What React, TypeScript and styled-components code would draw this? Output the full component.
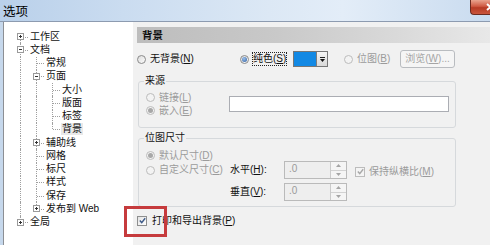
import React from 'react';
import styled, { createGlobalStyle, css } from 'styled-components';

const Global = createGlobalStyle`
  html, body { margin: 0; padding: 0; background: #f0f0f0; }
  body { font-family: "Liberation Sans", "Noto Sans CJK SC", sans-serif; }
  * { box-sizing: border-box; }
`;

const Window = styled.div`
  width: 490px;
  height: 245px;
  overflow: hidden;
  display: flex;
  flex-direction: column;
  color: #111;
`;

const TitleBar = styled.div`
  height: 22px;
  flex: none;
  display: flex;
  align-items: flex-start;
  border-bottom: 1px solid #8d9bb0;
  background: linear-gradient(90deg, #b9d0ea 0%, #cadcf0 25%, #dce8f5 55%, #e3edf8 70%, #c9dbef 100%);
`;

const Title = styled.div`
  font-size: 12.5px;
  line-height: 21px;
  padding-left: 3px;
  font-family: "Noto Sans CJK SC", sans-serif;
  color: #000;
`;

const CloseButton = styled.div`
  margin-left: auto;
  width: 20px;
  height: 15px;
  border: 1px solid #6b2b20;
  border-top: none;
  border-right: none;
  border-bottom-left-radius: 4px;
  background: linear-gradient(#e9a48f, #cf5a43 45%, #b63a24 55%, #c9553c);
  overflow: hidden;
  display: flex;
  align-items: center;
  padding-left: 15px;
`;

const Body = styled.div`
  flex: 1;
  display: flex;
  background: #f1f1f1;
  border-left: 3px solid #c6d8ec;
`;

const TreePanel = styled.div`
  width: 130px;
  flex: none;
  background: #fff;
  border-left: 1px solid #8c8f94;
  padding: 8px 0 0 8px;
`;

const TreeRow = styled.div`
  height: 13.26px;
  display: flex;
  align-items: stretch;
`;

type GuideKind = 'pipe' | 'tee' | 'elbow' | 'top' | 'blank';

const Guide = styled.span<{ $kind: GuideKind }>`
  width: 16px;
  flex: none;
  position: relative;
  display: flex;
  align-items: center;
  padding-left: 5px;
  &::before {
    content: '';
    position: absolute;
    left: 8px;
    border-left: 1px dotted #a0a0a0;
    display: ${p => (p.$kind === 'blank' ? 'none' : 'block')};
    top: ${p => (p.$kind === 'top' ? '50%' : '0')};
    bottom: ${p => (p.$kind === 'elbow' ? '50%' : '0')};
  }
  &::after {
    content: '';
    position: absolute;
    left: 9px;
    right: 0;
    top: 50%;
    border-top: 1px dotted #a0a0a0;
    display: ${p => (p.$kind === 'pipe' || p.$kind === 'blank' ? 'none' : 'block')};
  }
`;

const ExpanderBox = styled.svg`
  position: relative;
  z-index: 1;
  display: block;
`;

const TreeLabel = styled.span<{ $selected?: boolean }>`
  font-size: 10px;
  line-height: 12px;
  align-self: center;
  padding: 0 1px;
  margin-left: 1px;
  white-space: nowrap;
  color: #111;
  background: ${p => (p.$selected ? '#e9e9e9' : 'transparent')};
`;

const RightPanel = styled.div`
  flex: 1;
  margin-left: 4px;
  padding-top: 5px;
`;

const Header = styled.div`
  height: 16px;
  line-height: 16px;
  padding-left: 5px;
  font-size: 10.5px;
  font-weight: bold;
  background: linear-gradient(90deg, #bdbdbd 0%, #c9c9c9 40%, #dadada 75%, #e8e8e8 100%);
`;

const Content = styled.div`
  width: 319px;
`;

const OptionsRow = styled.div`
  margin-top: 7px;
  height: 18px;
  display: grid;
  grid-template-columns: 103px 53px 51px 56px 55px;
  align-items: center;
`;

const Choice = styled.span<{ $disabled?: boolean }>`
  display: inline-flex;
  align-items: center;
  gap: 4px;
  font-size: 10px;
  line-height: 12px;
  white-space: nowrap;
  color: ${p => (p.$disabled ? '#9b9b9b' : '#111')};
`;

const ChoiceText = styled.span<{ $focus?: boolean }>`
  ${p =>
    p.$focus &&
    css`
      outline: 1px dotted #222;
      outline-offset: 0px;
    `}
`;

const RadioDot = styled.span<{ $checked?: boolean; $disabled?: boolean }>`
  width: 9px;
  height: 9px;
  flex: none;
  border-radius: 50%;
  display: inline-grid;
  place-items: center;
  border: 1px solid ${p => (p.$disabled ? '#bcbcbc' : '#8a8a8a')};
  background: ${p => (p.$disabled ? '#f3f3f3' : 'linear-gradient(135deg, #dcdcdc, #fbfbfb)')};
  &::after {
    content: '';
    width: 5px;
    height: 5px;
    border-radius: 50%;
    display: ${p => (p.$checked ? 'block' : 'none')};
    background: ${p =>
      p.$disabled ? '#a8a8a8' : 'radial-gradient(circle at 40% 35%, #9cc0ec, #2b5c9e)'};
  }
`;

const CheckBox = styled.span<{ $disabled?: boolean }>`
  width: 10px;
  height: 10px;
  flex: none;
  display: inline-grid;
  place-items: center;
  border: 1px solid ${p => (p.$disabled ? '#bcbcbc' : '#8e8f8f')};
  background: ${p => (p.$disabled ? '#f4f4f4' : 'linear-gradient(135deg, #e3e3e3, #ffffff)')};
`;

const ColorCombo = styled.span`
  display: inline-flex;
  width: 35px;
  height: 16px;
  border: 1px solid #777;
`;

const Swatch = styled.span`
  width: 23px;
  background: #1389e4;
  border-right: 1px solid #7d7d7d;
`;

const ComboArrow = styled.span`
  flex: 1;
  display: grid;
  place-items: center;
  background: linear-gradient(#f4f4f4, #d9d9d9);
`;

const Button = styled.button`
  width: 55px;
  height: 18px;
  padding: 0;
  border: 1px solid #b9bcc0;
  border-radius: 3px;
  background: #f5f5f5;
  color: #a5a5a5;
  font-family: inherit;
  font-size: 10px;
  line-height: 12px;
`;

const Group = styled.fieldset<{ $gap: number }>`
  margin: ${p => p.$gap}px 0 0 1px;
  width: 318px;
  border: 1px solid #d6d9dc;
  border-radius: 3px;
  padding: 0;
  min-width: 0;
`;

const Legend = styled.legend`
  font-size: 10px;
  line-height: 12px;
  padding: 0 1px;
  margin-left: 5px;
  color: #111;
`;

const SourceGrid = styled.div`
  display: grid;
  grid-template-columns: 83px 220px;
  grid-template-rows: 13px 13px;
  padding: 4px 0 10px 7px;
  align-items: center;
`;

const TextBox = styled.span`
  grid-column: 2;
  grid-row: 1 / 3;
  align-self: center;
  width: 220px;
  height: 16px;
  border: 1px solid #abadb3;
  background: #fff;
`;

const SizeGrid = styled.div`
  display: grid;
  grid-template-columns: 84px 54px 63px 1fr;
  grid-template-rows: 14px 20px 3px 18px;
  padding: 2px 0 5px 7px;
  align-items: center;
`;

const FullRow = styled.div`
  grid-column: 1 / -1;
`;

const FieldLabel = styled.span`
  font-size: 10px;
  line-height: 12px;
  color: #111;
  white-space: nowrap;
`;

const RatioCell = styled.span`
  padding-left: 8px;
`;

const Spinner = styled.span`
  display: inline-flex;
  width: 63px;
  height: 18px;
  border: 1px solid #bababa;
  background: #eeeeee;
`;

const SpinValue = styled.span`
  flex: 1;
  font-size: 10px;
  line-height: 14px;
  padding-left: 4px;
  color: #9a9a9a;
`;

const SpinButtons = styled.span`
  width: 16px;
  display: flex;
  flex-direction: column;
  border-left: 1px solid #cbcbcb;
`;

const SpinBtn = styled.span`
  flex: 1;
  display: grid;
  place-items: center;
  background: #f5f5f5;
  & + & {
    border-top: 1px solid #d2d2d2;
  }
`;

const PrintRow = styled.div`
  position: relative;
  margin-top: 7px;
  height: 13px;
  display: flex;
  align-items: center;
`;

const PrintChoice = styled(Choice)`
  gap: 5px;
`;

const Annotation = styled.span`
  position: absolute;
  left: -13px;
  top: -8px;
  width: 43px;
  height: 31px;
  border: 3px solid #c63b3d;
  pointer-events: none;
`;

const Expander = ({ open }: { open: boolean }) => (
  <ExpanderBox width="7" height="7" viewBox="0 0 7 7">
    <rect x="0.5" y="0.5" width="6" height="6" fill="#fff" stroke="#9a9a9a" />
    <line x1="2" y1="3.5" x2="5" y2="3.5" stroke="#333" />
    {!open && <line x1="3.5" y1="2" x2="3.5" y2="5" stroke="#333" />}
  </ExpanderBox>
);

const Check = ({ color }: { color: string }) => (
  <svg width="7" height="7" viewBox="0 0 7 7">
    <path d="M0.8 3.6 L2.7 5.6 L6.2 1.2" fill="none" stroke={color} strokeWidth="1.4" />
  </svg>
);

const Chevron = ({ up }: { up: boolean }) => (
  <svg width="5" height="3" viewBox="0 0 5 3">
    <path d={up ? 'M0 3 L2.5 0 L5 3 Z' : 'M0 0 L2.5 3 L5 0 Z'} fill="#a5a5a5" />
  </svg>
);

const CloseGlyph = () => (
  <svg width="9" height="8" viewBox="0 0 9 8" style={{ flex: 'none' }}>
    <path d="M1 1 L8 7 M8 1 L1 7" stroke="#fff" strokeWidth="2" />
  </svg>
);

type TreeItem = { label: string; guides: GuideKind[]; exp?: 'plus' | 'minus'; selected?: boolean };

const tree: TreeItem[] = [
  { label: '工作区', guides: ['top'], exp: 'plus' },
  { label: '文档', guides: ['tee'], exp: 'minus' },
  { label: '常规', guides: ['pipe', 'tee'] },
  { label: '页面', guides: ['pipe', 'tee'], exp: 'minus' },
  { label: '大小', guides: ['pipe', 'pipe', 'tee'] },
  { label: '版面', guides: ['pipe', 'pipe', 'tee'] },
  { label: '标签', guides: ['pipe', 'pipe', 'tee'] },
  { label: '背景', guides: ['pipe', 'pipe', 'elbow'], selected: true },
  { label: '辅助线', guides: ['pipe', 'tee'], exp: 'plus' },
  { label: '网格', guides: ['pipe', 'tee'] },
  { label: '标尺', guides: ['pipe', 'tee'] },
  { label: '样式', guides: ['pipe', 'tee'] },
  { label: '保存', guides: ['pipe', 'tee'] },
  { label: '发布到 Web', guides: ['pipe', 'elbow'], exp: 'plus' },
  { label: '全局', guides: ['elbow'], exp: 'plus' },
];

const Radio = ({
  text,
  k,
  checked,
  disabled,
  focus,
}: {
  text: string;
  k: string;
  checked?: boolean;
  disabled?: boolean;
  focus?: boolean;
}) => (
  <Choice $disabled={disabled}>
    <RadioDot $checked={checked} $disabled={disabled} />
    <ChoiceText $focus={focus}>
      {text}(<u>{k}</u>)
    </ChoiceText>
  </Choice>
);

const SpinBox = () => (
  <Spinner>
    <SpinValue>.0</SpinValue>
    <SpinButtons>
      <SpinBtn>
        <Chevron up />
      </SpinBtn>
      <SpinBtn>
        <Chevron up={false} />
      </SpinBtn>
    </SpinButtons>
  </Spinner>
);

export default function App() {
  return (
    <>
      <Global />
      <Window>
        <TitleBar>
          <Title>选项</Title>
          <CloseButton>
            <CloseGlyph />
          </CloseButton>
        </TitleBar>
        <Body>
          <TreePanel>
            {tree.map(item => (
              <TreeRow key={item.label}>
                {item.guides.map((g, i) => (
                  <Guide key={i} $kind={g}>
                    {i === item.guides.length - 1 && item.exp && <Expander open={item.exp === 'minus'} />}
                  </Guide>
                ))}
                <TreeLabel $selected={item.selected}>{item.label}</TreeLabel>
              </TreeRow>
            ))}
          </TreePanel>
          <RightPanel>
            <Header>背景</Header>
            <Content>
              <OptionsRow>
                <Radio text="无背景" k="N" />
                <Radio text="纯色" k="S" checked focus />
                <ColorCombo>
                  <Swatch />
                  <ComboArrow>
                    <svg width="5" height="5" viewBox="0 0 5 5">
                      <rect x="0" y="0" width="5" height="1" fill="#222" />
                      <path d="M0 2 L2.5 5 L5 2 Z" fill="#111" />
                    </svg>
                  </ComboArrow>
                </ColorCombo>
                <Radio text="位图" k="B" disabled />
                <Button disabled>
                  浏览(<u>W</u>)...
                </Button>
              </OptionsRow>

              <Group $gap={7}>
                <Legend>来源</Legend>
                <SourceGrid>
                  <Radio text="链接" k="L" disabled />
                  <TextBox />
                  <Radio text="嵌入" k="E" checked disabled />
                </SourceGrid>
              </Group>

              <Group $gap={4}>
                <Legend>位图尺寸</Legend>
                <SizeGrid>
                  <FullRow>
                    <Radio text="默认尺寸" k="D" checked disabled />
                  </FullRow>
                  <Radio text="自定义尺寸" k="C" disabled />
                  <FieldLabel>
                    水平(<u>H</u>):
                  </FieldLabel>
                  <SpinBox />
                  <RatioCell>
                    <Choice $disabled>
                      <CheckBox $disabled>
                        <Check color="#a8a8a8" />
                      </CheckBox>
                      <span>
                        保持纵横比(<u>M</u>)
                      </span>
                    </Choice>
                  </RatioCell>
                  <FullRow />
                  <span />
                  <FieldLabel>
                    垂直(<u>V</u>):
                  </FieldLabel>
                  <SpinBox />
                  <span />
                </SizeGrid>
              </Group>

              <PrintRow>
                <PrintChoice>
                  <CheckBox>
                    <Check color="#3d5a88" />
                  </CheckBox>
                  <span>
                    打印和导出背景(<u>P</u>)
                  </span>
                </PrintChoice>
                <Annotation />
              </PrintRow>
            </Content>
          </RightPanel>
        </Body>
      </Window>
    </>
  );
}
